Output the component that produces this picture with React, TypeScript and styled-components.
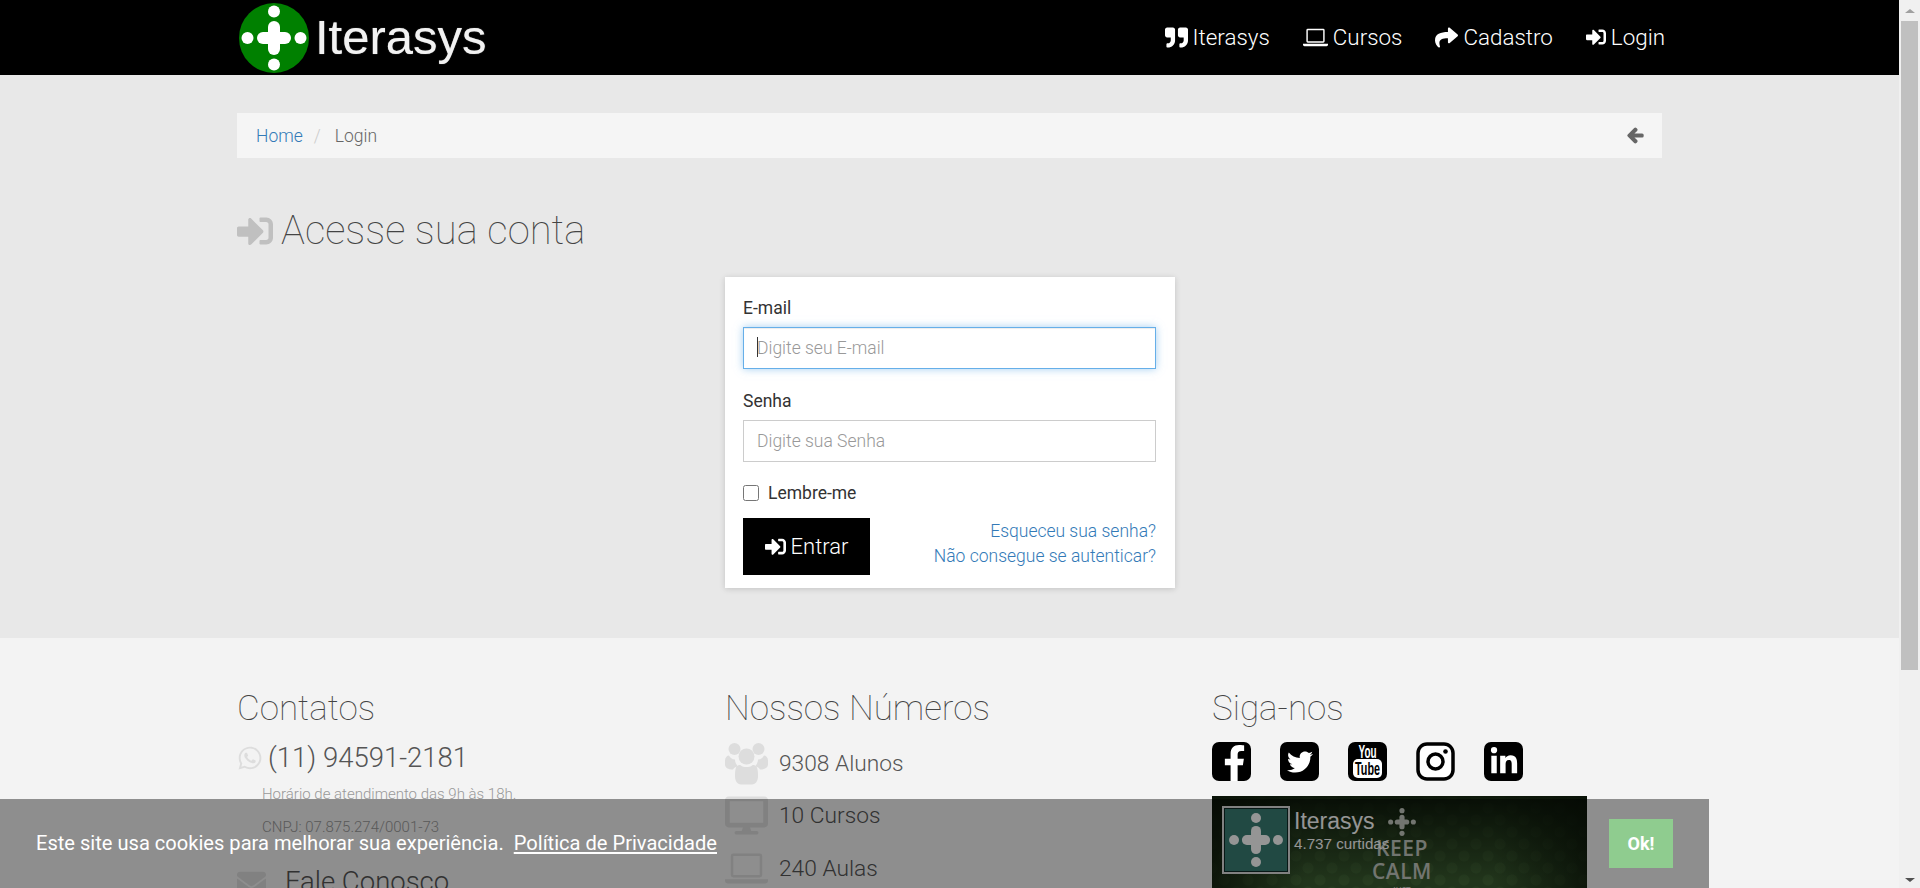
import { FC } from 'react';
import styled, { createGlobalStyle } from 'styled-components';
import { FaArrowLeft, FaDesktop, FaEnvelope, FaFacebookF, FaLinkedinIn, FaQuoteRight, FaShare, FaSignInAlt, FaTwitter, FaWhatsapp } from 'react-icons/fa';

const GlobalStyle = createGlobalStyle`
  html, body {
    margin: 0;
    height: 888px;
    overflow: hidden;
  }
  body {
    font-family: Roboto, "Liberation Sans", sans-serif;
    font-weight: 300;
    color: #555;
  }
  * {
    box-sizing: border-box;
  }
`;

const Screen = styled.div`
  display: flex;
  width: 1920px;
  height: 888px;
  overflow: hidden;
  position: relative;
`;

const Page = styled.div`
  width: 1899px;
  flex: none;
  background: #e8e8e8;
`;

/* top bar */
const TopBar = styled.header`
  height: 75px;
  background: #000;
  padding: 0 234px 0 239px;
  display: flex;
  align-items: center;
  justify-content: space-between;
`;

const Brand = styled.a`
  display: flex;
  align-items: center;
  gap: 6px;
  color: #f2f2f2;
  font: 400 49px/75px "Liberation Sans", Arial, sans-serif;
  text-shadow: 0 0 1px #999;
`;

const Menu = styled.nav`
  display: flex;
  gap: 33px;
  margin-top: -1px;
`;

const MenuItem = styled.a<{ $icon?: number }>`
  display: flex;
  align-items: center;
  gap: 5px;
  color: #fff;
  font-size: 22.4px;
  font-weight: 300;
  svg {
    font-size: ${(p) => p.$icon ?? 23}px;
  }
`;

/* breadcrumb */
const Main = styled.main`
  height: 563px;
  padding: 38px 237px 0;
`;

const Crumbs = styled.div`
  height: 45px;
  background: #f5f5f5;
  display: flex;
  align-items: center;
  padding: 0 18px 0 19px;
  font-size: 17.5px;
  color: #666;
`;

const CrumbLink = styled.a`
  color: #337ab7;
`;

const CrumbSlash = styled.span`
  color: #ccc;
  margin: 0 14px 0 11px;
`;

const BackLink = styled.a`
  margin-left: auto;
  color: #666;
  display: flex;
  font-size: 17px;
  svg {
    stroke: currentColor;
    stroke-width: 45px;
  }
`;

const PageTitle = styled.h1`
  margin: 46px 0 0;
  height: 53px;
  display: flex;
  align-items: center;
  gap: 8px;
  font-size: 40px;
  font-weight: 100;
  line-height: 53px;
  color: #444;
  svg {
    color: #c0c0c0;
    font-size: 36px;
  }
`;

/* login card */
const Card = styled.form`
  width: 450px;
  height: 311px;
  margin: 20px auto 0 488px;
  padding: 19px 19px 0 18px;
  background: #fff;
  box-shadow: 0 1px 6px rgba(0, 0, 0, 0.16);
`;

const Label = styled.label`
  display: block;
  font-size: 17.5px;
  font-weight: 400;
  line-height: 24px;
  color: #333;
`;

const Field = styled.div<{ $gap: number }>`
  position: relative;
  margin-top: ${(p) => p.$gap}px;
`;

const Input = styled.input<{ $focus?: boolean }>`
  display: block;
  width: 100%;
  height: 42px;
  padding: 0 13px;
  border-style: solid;
  border-color: ${(p) => (p.$focus ? '#66afe9' : '#ccc')};
  border-width: ${(p) => (p.$focus ? '1px' : '1.5px')};
  outline: none;
  font: 300 17.5px Roboto, sans-serif;
  box-shadow: ${(p) => (p.$focus ? 'inset 0 1px 1px rgba(0,0,0,.075), 0 0 8px rgba(102,175,233,.6)' : 'none')};
  &::placeholder {
    color: #999;
    opacity: 1;
  }
`;

const Caret = styled.span`
  position: absolute;
  left: 14px;
  top: 10px;
  width: 1px;
  height: 20px;
  background: #333;
`;

const CheckRow = styled.label`
  display: flex;
  align-items: center;
  gap: 9px;
  height: 24px;
  margin-top: 19px;
  font-size: 17.5px;
  font-weight: 400;
  color: #333;
`;

const CheckBox = styled.span`
  width: 16px;
  height: 16px;
  border: 1px solid #767676;
  border-radius: 2.5px;
  background: #fff;
`;

const ActionRow = styled.div`
  display: flex;
  justify-content: space-between;
  align-items: flex-start;
  margin-top: 13px;
`;

const SubmitButton = styled.button`
  width: 127px;
  height: 57px;
  display: flex;
  align-items: center;
  justify-content: center;
  gap: 5px;
  border: 0;
  background: #000;
  color: #fff;
  font: 300 22px Roboto, sans-serif;
  svg {
    font-size: 21px;
  }
`;

const HelpLinks = styled.div`
  display: flex;
  flex-direction: column;
  align-items: flex-end;
  margin-top: 1px;
  font-size: 17.5px;
  line-height: 25px;
  color: #337ab7;
`;

/* footer */
const Footer = styled.footer`
  height: 250px;
  background: #f3f3f3;
  padding: 0 0 0 237px;
  display: grid;
  grid-template-columns: 488px 487px 1fr;
  overflow: hidden;
`;

const Column = styled.section`
  padding-top: 49px;
`;

const ColumnTitle = styled.h3`
  margin: 2px 0 -2px;
  height: 40px;
  font-size: 35px;
  font-weight: 100;
  line-height: 40px;
  color: #444;
`;

const Phone = styled.div`
  display: flex;
  align-items: center;
  gap: 5px;
  height: 41px;
  margin-top: 10px;
  font-size: 27.5px;
  color: #555;
  svg {
    color: #ddd;
    font-size: 26px;
  }
`;

const Note = styled.p`
  margin: 0 0 0 25px;
  font-size: 15px;
  line-height: 33px;
  color: #999;
`;

const MailLink = styled.div`
  display: flex;
  align-items: center;
  gap: 19px;
  margin-top: 20px;
  font-size: 27.5px;
  line-height: 36px;
  svg {
    color: #ddd;
    font-size: 29px;
  }
`;

const Stats = styled.ul`
  list-style: none;
  margin: 10px 0 0;
  padding: 0;
`;

const Stat = styled.li`
  height: 52.5px;
  display: flex;
  align-items: center;
  gap: 11px;
  font-size: 22.75px;
  color: #555;
`;

const StatIcon = styled.span`
  width: 43px;
  display: flex;
  color: #ddd;
`;

const Socials = styled.div`
  display: flex;
  gap: 29px;
  margin-top: 15px;
`;

const SocialSquare = styled.a<{ $size: number; $bottom?: boolean }>`
  width: 39px;
  height: 39px;
  display: flex;
  align-items: ${(p) => (p.$bottom ? 'flex-end' : 'center')};
  justify-content: ${(p) => (p.$bottom ? 'flex-start' : 'center')};
  padding-left: ${(p) => (p.$bottom ? '6px' : '0')};
  overflow: hidden;
  border-radius: 7px;
  background: #000;
  color: #fff;
  font-size: ${(p) => p.$size}px;
`;

const SocialPlain = styled.a`
  width: 39px;
  height: 39px;
  display: flex;
`;

/* facebook box */
const FanBox = styled.div`
  position: relative;
  width: 375px;
  height: 214px;
  margin-top: 15px;
  padding: 10px;
  overflow: hidden;
  background:
    linear-gradient(180deg, rgba(8, 16, 6, 0.9), rgba(8, 16, 6, 0) 40%),
    linear-gradient(90deg, rgba(8, 16, 6, 0.7), rgba(8, 16, 6, 0) 25%, rgba(8, 16, 6, 0) 75%, rgba(8, 16, 6, 0.7)),
    radial-gradient(circle, rgba(120, 170, 100, 0.14) 5px, transparent 6px) 0 0 / 24px 24px,
    radial-gradient(circle, rgba(120, 170, 100, 0.14) 5px, transparent 6px) 12px 12px / 24px 24px,
    #3a5c30;
`;

const FanThumb = styled.div`
  width: 68px;
  height: 68px;
  border: 2px solid #ddd;
  box-shadow: inset 0 0 0 1px #0f2a26;
  background: #3a7e74;
  display: flex;
  align-items: center;
  justify-content: center;
`;

const FanText = styled.div`
  position: absolute;
  left: 82px;
  top: 12px;
  font-family: "Liberation Sans", Arial, sans-serif;
  font-weight: 400;
  color: #fff;
  line-height: 1;
`;

const FanName = styled.div`
  font-size: 23px;
  line-height: 26px;
`;

const FanLikes = styled.div`
  font-size: 15.2px;
  line-height: 18px;
  margin-top: 1px;
`;

const FanPoster = styled.div`
  position: absolute;
  left: 140px;
  top: 11px;
  width: 100px;
  display: flex;
  flex-direction: column;
  align-items: center;
  font-family: "Open Sans", sans-serif;
  font-weight: 600;
  color: #c4c9c0;
  line-height: 1;
`;

const PosterBig = styled.div`
  font-size: 21px;
  line-height: 23px;
  letter-spacing: 0.5px;
`;

const PosterSmall = styled.div`
  font-size: 8px;
  margin-top: 3px;
`;

/* cookie notice */
const CookieBar = styled.div`
  position: absolute;
  left: 0;
  bottom: 0;
  width: 1709px;
  height: 89px;
  background: rgba(0, 0, 0, 0.415);
  display: flex;
  align-items: center;
  padding: 0 36px 2px;
  color: #fff;
  font-size: 20.1px;
  font-weight: 400;
`;

const CookieLink = styled.a`
  margin-left: 10px;
  text-decoration: underline;
  color: #fff;
`;

const CookieButton = styled.button`
  position: absolute;
  left: 1609px;
  top: 20px;
  width: 64px;
  height: 49px;
  border: 0;
  background: #8fcc8f;
  color: #fff;
  font: 700 18px Roboto, sans-serif;
`;

/* scrollbar */
const ScrollTrack = styled.div`
  width: 21px;
  flex: none;
  background: #f0f0f0;
  display: flex;
  flex-direction: column;
  align-items: center;
  position: relative;
`;

const ScrollThumb = styled.div`
  width: 17px;
  height: 649px;
  margin-top: 21px;
  background: #c0c0c0;
`;

const ScrollArrow = styled.div<{ $down?: boolean }>`
  position: absolute;
  ${(p) => (p.$down ? 'bottom: 6px;' : 'top: 9px;')}
  width: 0;
  height: 0;
  border-left: 5px solid transparent;
  border-right: 5px solid transparent;
  ${(p) => (p.$down ? 'border-top: 4px solid #505050;' : 'border-bottom: 4px solid #a0a0a0;')}
`;

const LogoMark: FC<{ size: number; bg?: string; color?: string }> = ({ size, bg = '#008000', color = '#fff' }) => (
  <svg width={size} height={size} viewBox="0 0 70 70">
    {bg !== 'none' && <circle cx="35" cy="35" r="35" fill={bg} />}
    <g fill={color}>
      <circle cx="35" cy="8.5" r="6" />
      <circle cx="35" cy="61.5" r="6" />
      <circle cx="8.5" cy="35" r="6" />
      <circle cx="61.5" cy="35" r="6" />
      <rect x="29" y="18" width="12" height="34" rx="6" />
      <rect x="18" y="29" width="34" height="12" rx="6" />
    </g>
  </svg>
);

const LaptopIcon: FC<{ size: number }> = ({ size }) => (
  <svg width={size} height={size} viewBox="0 0 26 26" fill="currentColor">
    <path d="M5 4h16a1.5 1.5 0 0 1 1.5 1.5V17a1.5 1.5 0 0 1-1.5 1.5H5A1.5 1.5 0 0 1 3.5 17V5.5A1.5 1.5 0 0 1 5 4zm0 1.5V17h16V5.5z" fillRule="evenodd" />
    <path d="M0 19.5h26v1a1.5 1.5 0 0 1-1.5 1.5H1.5A1.5 1.5 0 0 1 0 20.5z" />
  </svg>
);

const UsersIcon: FC<{ size: number }> = ({ size }) => (
  <svg width={size} height={size} viewBox="0 0 43 42" fill="currentColor">
    <circle cx="9.5" cy="6.5" r="6" />
    <circle cx="33.5" cy="6.5" r="6" />
    <circle cx="21.5" cy="14" r="8" />
    <path d="M0 18c0-3 2-5 4-5 1 2 3 4 6 4 0 2 1 5 3 7-2 0-4 1-5 3-5 0-8-2-8-5v-4z" />
    <path d="M43 18c0-3-2-5-4-5-1 2-3 4-6 4 0 2-1 5-3 7 2 0 4 1 5 3 5 0 8-2 8-5v-4z" />
    <path d="M11 25c1-2 3-3 5-2 2 2 9 2 11 0 2-1 4 0 5 2 1 3 1 6 1 9 0 5-3 8-6 8H16c-3 0-6-3-6-8 0-3 0-6 1-9z" />
  </svg>
);

const YoutubeIcon: FC = () => (
  <svg width="39" height="39" viewBox="0 0 39 39">
    <rect width="39" height="39" rx="7" fill="#000" />
    <rect x="5" y="17" width="29" height="19" rx="5" fill="#fff" />
    <text x="19.5" y="15.5" textAnchor="middle" fill="#fff" fontFamily="'Liberation Sans Narrow', 'Liberation Sans', sans-serif" fontWeight="700" fontSize="18" textLength="18" lengthAdjust="spacingAndGlyphs">You</text>
    <text x="19.5" y="33" textAnchor="middle" fill="#000" fontFamily="'Liberation Sans Narrow', 'Liberation Sans', sans-serif" fontWeight="700" fontSize="18" textLength="25" lengthAdjust="spacingAndGlyphs">Tube</text>
  </svg>
);

const InstagramIcon: FC = () => (
  <svg width="39" height="39" viewBox="0 0 39 39">
    <rect x="2" y="2" width="35" height="35" rx="9" fill="#fff" stroke="#000" strokeWidth="3.5" />
    <circle cx="19.5" cy="19.5" r="7.5" fill="none" stroke="#000" strokeWidth="3.5" />
    <circle cx="29.5" cy="9.5" r="2.3" fill="#000" />
  </svg>
);

const App: FC = () => {
  return (
    <Screen>
      <GlobalStyle />
      <Page>
        <TopBar>
          <Brand>
            <LogoMark size={70} />
            Iterasys
          </Brand>
          <Menu>
            <MenuItem><FaQuoteRight /> Iterasys</MenuItem>
            <MenuItem><LaptopIcon size={25} /> Cursos</MenuItem>
            <MenuItem><FaShare /> Cadastro</MenuItem>
            <MenuItem $icon={20}><FaSignInAlt /> Login</MenuItem>
          </Menu>
        </TopBar>
        <Main>
          <Crumbs>
            <CrumbLink>Home</CrumbLink>
            <CrumbSlash>/</CrumbSlash>
            Login
            <BackLink><FaArrowLeft /></BackLink>
          </Crumbs>
          <PageTitle><FaSignInAlt /> Acesse sua conta</PageTitle>
          <Card>
            <Label>E-mail</Label>
            <Field $gap={7}>
              <Input $focus placeholder="Digite seu E-mail" />
              <Caret />
            </Field>
            <Field $gap={20}>
              <Label>Senha</Label>
            </Field>
            <Field $gap={7}>
              <Input placeholder="Digite sua Senha" />
            </Field>
            <CheckRow><CheckBox /> Lembre-me</CheckRow>
            <ActionRow>
              <SubmitButton type="button"><FaSignInAlt /> Entrar</SubmitButton>
              <HelpLinks>
                <a>Esqueceu sua senha?</a>
                <a>Não consegue se autenticar?</a>
              </HelpLinks>
            </ActionRow>
          </Card>
        </Main>
        <Footer>
          <Column>
            <ColumnTitle>Contatos</ColumnTitle>
            <Phone><FaWhatsapp /> (11) 94591-2181</Phone>
            <Note>Horário de atendimento das 9h às 18h.</Note>
            <Note>CNPJ: 07.875.274/0001-73</Note>
            <MailLink><FaEnvelope /> Fale Conosco</MailLink>
          </Column>
          <Column>
            <ColumnTitle>Nossos Números</ColumnTitle>
            <Stats>
              <Stat><StatIcon><UsersIcon size={43} /></StatIcon> 9308 Alunos</Stat>
              <Stat><StatIcon><FaDesktop size={43} /></StatIcon> 10 Cursos</Stat>
              <Stat><StatIcon><LaptopIcon size={43} /></StatIcon> 240 Aulas</Stat>
            </Stats>
          </Column>
          <Column>
            <ColumnTitle>Siga-nos</ColumnTitle>
            <Socials>
              <SocialSquare $size={36} $bottom><FaFacebookF /></SocialSquare>
              <SocialSquare $size={26}><FaTwitter /></SocialSquare>
              <SocialPlain><YoutubeIcon /></SocialPlain>
              <SocialPlain><InstagramIcon /></SocialPlain>
              <SocialSquare $size={30}><FaLinkedinIn /></SocialSquare>
            </Socials>
            <FanBox>
              <FanThumb><LogoMark size={58} bg="none" /></FanThumb>
              <FanPoster>
                <LogoMark size={30} bg="none" color="#c4c9c0" />
                <PosterBig>KEEP</PosterBig>
                <PosterBig>CALM</PosterBig>
                <PosterSmall>JUST</PosterSmall>
              </FanPoster>
              <FanText>
                <FanName>Iterasys</FanName>
                <FanLikes>4.737 curtidas</FanLikes>
              </FanText>
            </FanBox>
          </Column>
        </Footer>
      </Page>
      <ScrollTrack>
        <ScrollArrow />
        <ScrollThumb />
        <ScrollArrow $down />
      </ScrollTrack>
      <CookieBar>
        Este site usa cookies para melhorar sua experiência.
        <CookieLink>Política de Privacidade</CookieLink>
        <CookieButton type="button">Ok!</CookieButton>
      </CookieBar>
    </Screen>
  );
};

export default App;
